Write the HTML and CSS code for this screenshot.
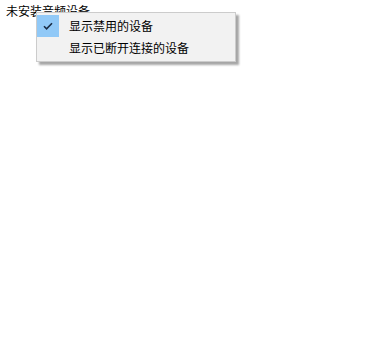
FILE: index.html
```html
<!DOCTYPE html>
<html>
<head>
<meta charset="utf-8">
<link rel="stylesheet" href="styles.css">
</head>
<body>
<div class="label">未安装音频设备</div>
<div class="menu">
  <div class="item checked">
    <span class="check"><svg width="10" height="8" viewBox="0 0 10 8"><path d="M1 4.2 L3.6 6.8 L9 1.2" fill="none" stroke="#1a2c44" stroke-width="1.6"/></svg></span>
    <span class="text">显示禁用的设备</span>
  </div>
  <div class="item">
    <span class="check"></span>
    <span class="text">显示已断开连接的设备</span>
  </div>
</div>
</body>
</html>
```
FILE: styles.css
```css
html, body {
  margin: 0;
  padding: 0;
  background: #ffffff;
  width: 390px;
  height: 339px;
  overflow: hidden;
  font-family: "Noto Sans CJK SC", "Noto Sans", sans-serif;
  font-size: 12px;
  color: #000;
}
.label {
  padding: 3px 0 0 6px;
  line-height: 16px;
}
.menu {
  position: absolute;
  left: 36px;
  top: 12px;
  width: 198px;
  padding: 2px 0;
  background: #f2f2f2;
  border: 1px solid #cccccc;
  box-shadow: 3px 3px 2px rgba(0, 0, 0, 0.35);
}
.item {
  display: flex;
  align-items: center;
  height: 22px;
}
.check {
  width: 22px;
  height: 22px;
  display: flex;
  align-items: center;
  justify-content: center;
}
.checked .check {
  background: #91c9f7;
}
.text {
  margin-left: 10px;
  line-height: 22px;
}
```
